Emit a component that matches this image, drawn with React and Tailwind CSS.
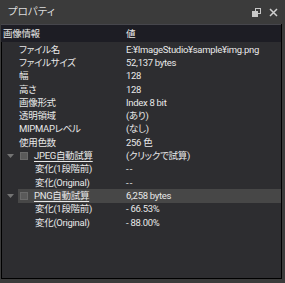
const rows = [
  { label: "ファイル名", value: "E:¥ImageStudio¥sample¥img.png" },
  { label: "ファイルサイズ", value: "52,137 bytes" },
  { label: "幅", value: "128" },
  { label: "高さ", value: "128" },
  { label: "画像形式", value: "Index 8 bit" },
  { label: "透明領域", value: "(あり)" },
  { label: "MIPMAPレベル", value: "(なし)" },
  { label: "使用色数", value: "256 色" },
];

const groups = [
  {
    label: "JPEG自動試算",
    value: "(クリックで試算)",
    children: [
      { label: "変化(1段階前)", value: "--" },
      { label: "変化(Original)", value: "--" },
    ],
  },
  {
    label: "PNG自動試算",
    value: "6,258 bytes",
    selected: true,
    children: [
      { label: "変化(1段階前)", value: "- 66.53%" },
      { label: "変化(Original)", value: "- 88.00%" },
    ],
  },
];

const Row = ({ children, value, className = "" }) => (
  <div className={`flex items-center h-[13.3px] ${className}`}>
    <div className="w-[124px] flex items-center shrink-0 h-full">{children}</div>
    <div className={`whitespace-nowrap ${value === "--" ? "tracking-[1px]" : ""}`}>{value}</div>
  </div>
);

export default function App() {
  return (
    <div
      className="w-[285px] h-[283px] bg-[#3b3b3b] flex flex-col text-[9.5px] leading-[12px] text-[#e8e8e8] tracking-[-0.3px]"
      style={{ fontFamily: 'Roboto, "Noto Sans CJK JP", sans-serif', fontFeatureSettings: '"palt"' }}
    >
      {/* title bar */}
      <div className="h-[24px] flex items-center pl-[8px] pr-[7px] shrink-0">
        <span className="text-[#dcdcdc] text-[10.5px] tracking-normal">プロパティ</span>
        <div className="ml-auto flex items-center gap-[8px]">
          <svg width="9" height="9" viewBox="0 0 9 9">
            <rect x="3.5" y="0.5" width="5" height="5" fill="none" stroke="#c8c8c8" />
            <rect x="0" y="3" width="6" height="6" fill="#c8c8c8" />
          </svg>
          <svg width="9" height="9" viewBox="0 0 9 9">
            <path d="M1 1L8 8M8 1L1 8" stroke="#d0d0d0" strokeWidth="1.5" />
          </svg>
        </div>
      </div>

      {/* panel */}
      <div className="h-[255px] ml-[1px] mr-[3px] border-l border-r border-b border-black bg-[#2d2d30] flex flex-col">
        <div className="h-[18px] bg-[#1d1d24] border-t border-[#46464c] flex items-center shrink-0 -ml-[1px]">
          <div className="w-[125px] pl-[2px]">画像情報</div>
          <div>値</div>
        </div>
        <div className="pt-[1px]">
          {rows.map((r) => (
            <Row key={r.label} value={r.value}>
              <span className="pl-[17px]">{r.label}</span>
            </Row>
          ))}
          {groups.map((g) => (
            <div key={g.label}>
              <Row value={g.value} className={g.selected ? "bg-[#474747]" : ""}>
                <span className="w-[16px] h-full flex justify-center items-center bg-[#2d2d30]">
                  <svg width="7" height="4" viewBox="0 0 7 4">
                    <path d="M0 0H7L3.5 4Z" fill="#747474" />
                  </svg>
                </span>
                <span className="w-[8px] h-[8px] bg-[#5a5a5a] border border-[#6a6a6a] mr-[6px] ml-[2px]" />
                <span className="underline underline-offset-2">{g.label}</span>
              </Row>
              {g.children.map((c) => (
                <Row key={c.label} value={c.value}>
                  <span className="pl-[33px]">{c.label}</span>
                </Row>
              ))}
            </div>
          ))}
        </div>
      </div>
    </div>
  );
}
